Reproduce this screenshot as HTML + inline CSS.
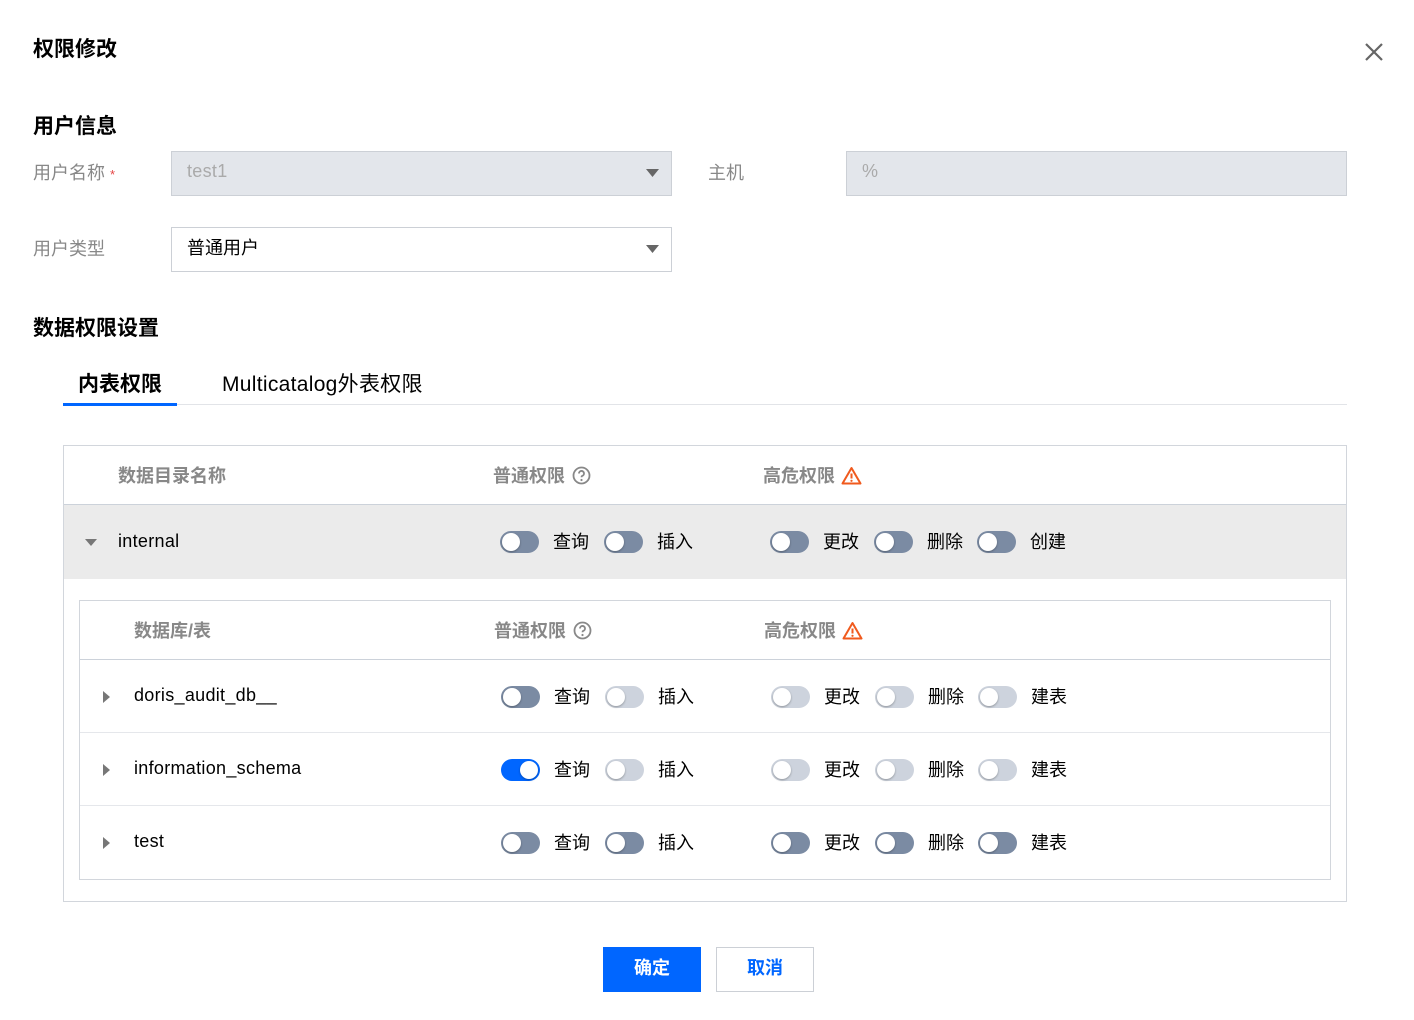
<!DOCTYPE html>
<html><head><meta charset="utf-8"><style>
*{box-sizing:border-box;margin:0;padding:0}
body{width:1414px;height:1020px;background:#fff;position:relative;overflow:hidden;font-family:"Liberation Sans","Noto Sans CJK SC",sans-serif;color:#000}
.a{position:absolute;white-space:nowrap}
.t{width:39px;height:22px;border-radius:11px;background:#7b8ba3;position:absolute}
.t::after{content:"";position:absolute;left:2px;top:2px;width:18px;height:18px;border-radius:50%;background:#fff;box-shadow:0 1px 2px rgba(0,0,0,.3)}
.t.l{background:#cdd3dd}
.t.on{background:#0066ff}
.t.on::after{left:19px}
.lb{position:absolute;font-size:18px;color:#000;white-space:nowrap}
.en{letter-spacing:.3px}
.h{font-size:18px;color:#888;font-weight:bold}
.gray{color:#888;font-size:18px}
.big{font-size:21px;font-weight:bold}
</style></head><body>
<div class="a big" style="left:33px;top:33px">权限修改</div>
<svg class="a" style="left:1364px;top:42px" width="20" height="20"><path d="M2 2L18 18M18 2L2 18" stroke="#666" stroke-width="2.2"/></svg>
<div class="a big" style="left:33px;top:110px">用户信息</div>
<div class="a gray" style="left:33px;top:159px">用户名称 <span style="color:#e54545;font-size:13px">*</span></div>
<div class="a" style="left:171px;top:151px;width:501px;height:45px;background:#e3e6eb;border:1px solid #ccd0d6"></div>
<div class="a en" style="left:187px;top:161px;font-size:18px;color:#aaa">test1</div>
<svg class="a" style="left:646px;top:169px" width="13" height="9"><path d="M0 0H13L6.5 8Z" fill="#666"/></svg>
<div class="a gray" style="left:708px;top:159px">主机</div>
<div class="a" style="left:846px;top:151px;width:501px;height:45px;background:#e3e6eb;border:1px solid #ccd0d6"></div>
<div class="a" style="left:862px;top:161px;font-size:18px;color:#aaa">%</div>
<div class="a gray" style="left:33px;top:235px">用户类型</div>
<div class="a" style="left:171px;top:227px;width:501px;height:45px;background:#fff;border:1px solid #ccd0d6"></div>
<div class="a" style="left:187px;top:234px;font-size:18px">普通用户</div>
<svg class="a" style="left:646px;top:245px" width="13" height="9"><path d="M0 0H13L6.5 8Z" fill="#666"/></svg>
<div class="a big" style="left:33px;top:312px">数据权限设置</div>
<div class="a big" style="left:78px;top:368px">内表权限</div>
<div class="a en" style="left:222px;top:368px;font-size:21px">Multicatalog外表权限</div>
<div class="a" style="left:63px;top:404px;width:1284px;height:1px;background:#e2e4e8"></div>
<div class="a" style="left:63px;top:403px;width:114px;height:3px;background:#0066ff"></div>

<div class="a" style="left:63px;top:445px;width:1284px;height:457px;border:1px solid #d2d6dc"></div>
<div class="a h" style="left:118px;top:462px">数据目录名称</div>
<div class="a h" style="left:493px;top:462px">普通权限</div>
<svg class="a" style="left:572px;top:466px" width="19" height="19"><circle cx="9.5" cy="9.5" r="8" fill="none" stroke="#888" stroke-width="1.8"/><path d="M7 7.5a2.5 2.5 0 1 1 3.3 2.3c-.6.3-.8.7-.8 1.4" fill="none" stroke="#888" stroke-width="1.8"/><circle cx="9.5" cy="14" r="1.1" fill="#888"/></svg>
<div class="a h" style="left:763px;top:462px">高危权限</div>
<svg class="a" style="left:841px;top:466px" width="21" height="19"><path d="M10.5 2L19.5 17.5H1.5Z" fill="none" stroke="#f05a1e" stroke-width="2" stroke-linejoin="round"/><path d="M10.5 7.5v5" stroke="#f05a1e" stroke-width="2"/><circle cx="10.5" cy="14.8" r="1.1" fill="#f05a1e"/></svg>
<div class="a" style="left:64px;top:504px;width:1282px;height:75px;background:#ebebeb;border-top:1px solid #ccd2da"></div>
<svg class="a" style="left:85px;top:539px" width="12" height="8"><path d="M0 0H12L6 7Z" fill="#777"/></svg>
<div class="a lb en" style="left:118px;top:531px">internal</div>
<div class="t" style="left:500px;top:531px"></div><div class="lb" style="left:553px;top:528px">查询</div>
<div class="t" style="left:604px;top:531px"></div><div class="lb" style="left:657px;top:528px">插入</div>
<div class="t" style="left:770px;top:531px"></div><div class="lb" style="left:823px;top:528px">更改</div>
<div class="t" style="left:874px;top:531px"></div><div class="lb" style="left:927px;top:528px">删除</div>
<div class="t" style="left:977px;top:531px"></div><div class="lb" style="left:1030px;top:528px">创建</div>

<div class="a" style="left:79px;top:600px;width:1252px;height:280px;border:1px solid #d2d6dc"></div>
<div class="a h" style="left:134px;top:617px">数据库/表</div>
<div class="a h" style="left:494px;top:617px">普通权限</div>
<svg class="a" style="left:573px;top:621px" width="19" height="19"><circle cx="9.5" cy="9.5" r="8" fill="none" stroke="#888" stroke-width="1.8"/><path d="M7 7.5a2.5 2.5 0 1 1 3.3 2.3c-.6.3-.8.7-.8 1.4" fill="none" stroke="#888" stroke-width="1.8"/><circle cx="9.5" cy="14" r="1.1" fill="#888"/></svg>
<div class="a h" style="left:764px;top:617px">高危权限</div>
<svg class="a" style="left:842px;top:621px" width="21" height="19"><path d="M10.5 2L19.5 17.5H1.5Z" fill="none" stroke="#f05a1e" stroke-width="2" stroke-linejoin="round"/><path d="M10.5 7.5v5" stroke="#f05a1e" stroke-width="2"/><circle cx="10.5" cy="14.8" r="1.1" fill="#f05a1e"/></svg>
<div class="a" style="left:80px;top:659px;width:1250px;height:1px;background:#ccd2da"></div>
<div class="a" style="left:80px;top:732px;width:1250px;height:1px;background:#e5e7eb"></div>
<div class="a" style="left:80px;top:805px;width:1250px;height:1px;background:#e5e7eb"></div>

<svg class="a" style="left:103px;top:691px" width="8" height="12"><path d="M0 0V12L7 6Z" fill="#777"/></svg>
<div class="a lb en" style="left:134px;top:685px">doris_audit_db__</div>
<div class="t" style="left:501px;top:686px"></div><div class="lb" style="left:554px;top:683px">查询</div>
<div class="t l" style="left:605px;top:686px"></div><div class="lb" style="left:658px;top:683px">插入</div>
<div class="t l" style="left:771px;top:686px"></div><div class="lb" style="left:824px;top:683px">更改</div>
<div class="t l" style="left:875px;top:686px"></div><div class="lb" style="left:928px;top:683px">删除</div>
<div class="t l" style="left:978px;top:686px"></div><div class="lb" style="left:1031px;top:683px">建表</div>

<svg class="a" style="left:103px;top:764px" width="8" height="12"><path d="M0 0V12L7 6Z" fill="#777"/></svg>
<div class="a lb en" style="left:134px;top:758px">information_schema</div>
<div class="t on" style="left:501px;top:759px"></div><div class="lb" style="left:554px;top:756px">查询</div>
<div class="t l" style="left:605px;top:759px"></div><div class="lb" style="left:658px;top:756px">插入</div>
<div class="t l" style="left:771px;top:759px"></div><div class="lb" style="left:824px;top:756px">更改</div>
<div class="t l" style="left:875px;top:759px"></div><div class="lb" style="left:928px;top:756px">删除</div>
<div class="t l" style="left:978px;top:759px"></div><div class="lb" style="left:1031px;top:756px">建表</div>

<svg class="a" style="left:103px;top:837px" width="8" height="12"><path d="M0 0V12L7 6Z" fill="#777"/></svg>
<div class="a lb en" style="left:134px;top:831px">test</div>
<div class="t" style="left:501px;top:832px"></div><div class="lb" style="left:554px;top:829px">查询</div>
<div class="t" style="left:605px;top:832px"></div><div class="lb" style="left:658px;top:829px">插入</div>
<div class="t" style="left:771px;top:832px"></div><div class="lb" style="left:824px;top:829px">更改</div>
<div class="t" style="left:875px;top:832px"></div><div class="lb" style="left:928px;top:829px">删除</div>
<div class="t" style="left:978px;top:832px"></div><div class="lb" style="left:1031px;top:829px">建表</div>

<div class="a" style="left:603px;top:947px;width:98px;height:45px;background:#0066ff;color:#fff;font-size:18px;font-weight:bold;text-align:center;line-height:43px">确定</div>
<div class="a" style="left:716px;top:947px;width:98px;height:45px;background:#fff;border:1px solid #ccd0d6;color:#0066ff;font-size:18px;font-weight:bold;text-align:center;line-height:41px">取消</div>
</body></html>
